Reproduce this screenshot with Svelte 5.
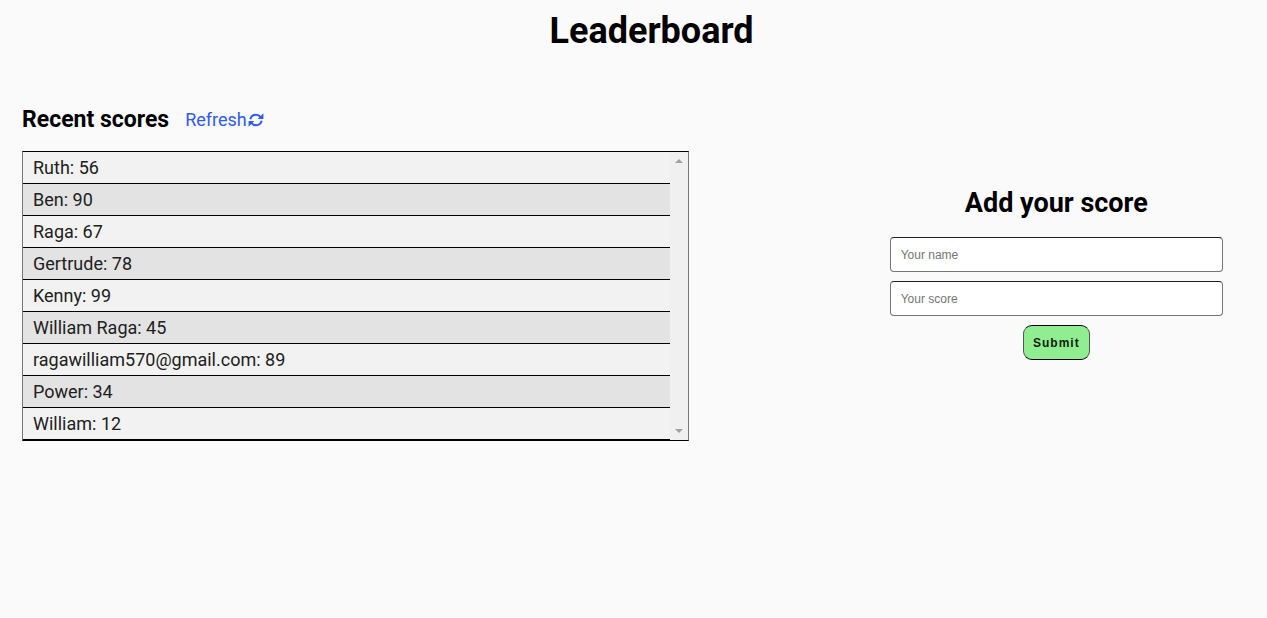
<script>
  let scores = $state([
    { user: 'Ruth', score: 56 },
    { user: 'Ben', score: 90 },
    { user: 'Raga', score: 67 },
    { user: 'Gertrude', score: 78 },
    { user: 'Kenny', score: 99 },
    { user: 'William Raga', score: 45 },
    { user: 'ragawilliam570@gmail.com', score: 89 },
    { user: 'Power', score: 34 },
    { user: 'William', score: 12 }
  ]);
  let name = $state('');
  let score = $state('');

  function submit(event) {
    event.preventDefault();
    if (!name || !score) return;
    scores.push({ user: name, score });
    name = '';
    score = '';
  }
</script>

<header>
  <h1>Leaderboard</h1>
</header>

<main>
  <section class="recent">
    <div class="heading">
      <h2>Recent scores</h2>
      <button type="button" class="refresh">
        Refresh<svg viewBox="0 0 16 14" aria-hidden="true">
          <path class="arc" d="M2.300 6.200C3 3.400 5.300 1.800 8 1.800c1.900 0 3.500.8 4.700 2.300M13.700 7.800C13 10.600 10.700 12.200 8 12.200c-1.900 0-3.500-.8-4.700-2.300" />
          <path class="tip" d="M15.400.2v5.700H9.700zM.6 13.800V8.100h5.700z" />
        </svg>
      </button>
    </div>
    <div class="board">
      <ul>
        {#each scores as entry}
          <li>{entry.user}: {entry.score}</li>
        {/each}
      </ul>
      <div class="track" aria-hidden="true">
        <svg viewBox="0 0 8 4"><path d="M0 4 4 0 8 4z" /></svg>
        <svg viewBox="0 0 8 4"><path d="M0 0 4 4 8 0z" /></svg>
      </div>
    </div>
  </section>

  <section class="add">
    <h2>Add your score</h2>
    <form onsubmit={submit}>
      <input type="text" aria-label="Your name" placeholder="Your name" bind:value={name} />
      <input type="text" aria-label="Your score" placeholder="Your score" bind:value={score} />
      <button type="submit">Submit</button>
    </form>
  </section>
</main>

<style>
  :global(body) {
    background: #fafafa;
    font-family: Roboto, sans-serif;
    color: #000;
  }
  h1, h2, ul {
    margin: 0;
    padding: 0;
  }
  header {
    padding: 10px 0 0 36px;
    text-align: center;
  }
  h1 {
    font-size: 36px;
    line-height: 42px;
    font-weight: 700;
  }
  main {
    display: grid;
    grid-template-columns: 2fr 1fr;
    column-gap: 201px;
    padding: 52px 44px 0 22px;
  }
  .heading {
    display: flex;
    align-items: center;
    gap: 16px;
    height: 31px;
    margin-bottom: 16px;
  }
  .heading h2 {
    font-size: 23px;
    font-weight: 700;
  }
  .refresh {
    display: flex;
    align-items: center;
    gap: 1px;
    border: 0;
    padding: 0;
    background: none;
    font: 18px Roboto, sans-serif;
    color: #2f5bea;
  }
  .refresh svg {
    width: 16px;
    height: 14px;
  }
  .arc {
    fill: none;
    stroke: #2f5bea;
    stroke-width: 2;
  }
  .tip {
    fill: #2f5bea;
  }
  .board {
    display: flex;
    border: 1px solid;
    border-color: #000 #767676;
    background: #f0f0f0;
  }
  ul {
    flex: 1;
    list-style: none;
    background: #f2f2f2;
  }
  li {
    box-sizing: border-box;
    height: 32px;
    padding-left: 10px;
    border-bottom: 1px solid #000;
    font-size: 18px;
    line-height: 31px;
    color: #212121;
  }
  li:nth-child(even) {
    background: #e3e3e3;
  }
  .track {
    width: 18px;
    display: flex;
    flex-direction: column;
    align-items: center;
    justify-content: space-between;
    padding: 7px 0;
    box-sizing: border-box;
  }
  .track svg {
    width: 8px;
    height: 4px;
    fill: #a0a0a0;
  }
  .add {
    padding-top: 83px;
  }
  .add h2 {
    font-size: 27px;
    line-height: 32px;
    font-weight: 700;
    text-align: center;
    margin-bottom: 18px;
  }
  form {
    display: flex;
    flex-direction: column;
    align-items: center;
    gap: 9px;
  }
  input {
    box-sizing: border-box;
    width: 100%;
    height: 35px;
    padding: 0 10px;
    border: 1px solid;
    border-color: #212121 #767676 #767676;
    border-radius: 4px;
    background: #fff;
    font: 12px "Liberation Sans", Arial, sans-serif;
  }
  input::placeholder {
    color: #757575;
  }
  form button {
    height: 35px;
    padding: 0 9px;
    border: 1px solid;
    border-color: #000 #555;
    border-radius: 9px;
    background: #90ee90;
    font: bold 12px "Liberation Sans", Arial, sans-serif;
    letter-spacing: 1px;
    color: #0d1f0d;
  }
</style>
